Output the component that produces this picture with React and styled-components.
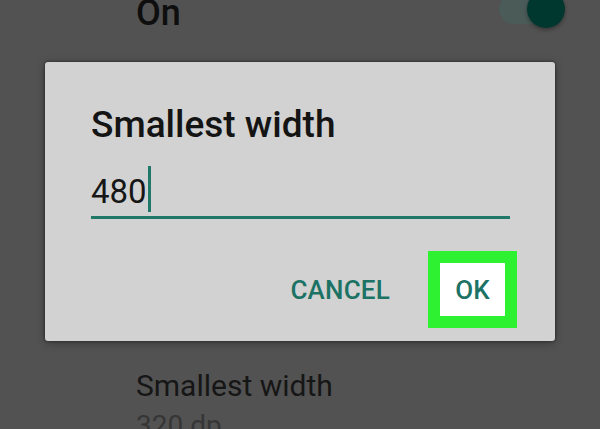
import styled, { createGlobalStyle } from 'styled-components'

const Global = createGlobalStyle`
  html, body {
    margin: 0;
    padding: 0;
    background: #525252;
    overflow: hidden;
  }
  body {
    font-family: Roboto, "Liberation Sans", sans-serif;
  }
`

const Screen = styled.div`
  width: 600px;
  height: 429px;
  background: #525252;
  display: flex;
  flex-direction: column;
  overflow: hidden;
  & > * {
    flex-shrink: 0;
  }
`

const SettingRow = styled.div`
  display: flex;
  align-items: flex-start;
  justify-content: space-between;
  padding: 0 35px 0 136px;
  height: 62px;
`

const SettingLabel = styled.div`
  margin-top: -5px;
  font-size: 36px;
  line-height: 36px;
  font-weight: 500;
  color: #0e0e0e;
`

const Toggle = styled.div`
  position: relative;
  width: 66px;
  height: 40px;
  margin-top: -10px;
`

const Track = styled.div`
  position: absolute;
  left: 0;
  top: 4px;
  width: 56px;
  height: 30px;
  border-radius: 15px;
  background: #4a5b58;
`

const Knob = styled.div`
  position: absolute;
  right: 0;
  top: 0;
  width: 38px;
  height: 38px;
  border-radius: 50%;
  background: #00372f;
  box-shadow: 0 2px 4px rgba(0, 0, 0, 0.35);
`

const Dialog = styled.div`
  margin-left: 45px;
  width: 510px;
  height: 279px;
  box-sizing: border-box;
  background: #d2d2d2;
  border-radius: 3px;
  box-shadow: 0 0 3px rgba(0, 0, 0, 0.55), 0 2px 10px rgba(0, 0, 0, 0.3);
  padding: 44px 45px 13px 46px;
  display: flex;
  flex-direction: column;
`

const Title = styled.div`
  font-size: 37px;
  line-height: 37px;
  font-weight: 500;
  color: #141414;
`

const Field = styled.div`
  margin-top: 23px;
  display: flex;
  align-items: flex-end;
  padding-bottom: 8px;
  border-bottom: 3px solid #1f7868;
`

const Value = styled.span`
  font-size: 33px;
  line-height: 33px;
  color: #161616;
`

const Caret = styled.span`
  width: 3px;
  height: 46px;
  margin: 0 0 -4px 1px;
  background: #1f7868;
`

const Actions = styled.div`
  margin-top: auto;
  display: flex;
  justify-content: flex-end;
  align-items: center;
  gap: 38px;
  margin-right: -7px;
`

const TextButton = styled.button`
  border: none;
  background: transparent;
  padding: 0;
  font-family: inherit;
  font-size: 26px;
  line-height: 26px;
  font-weight: 500;
  color: #1c7365;
  letter-spacing: 0.2px;
`

const Highlight = styled.div`
  width: 89px;
  height: 77px;
  box-sizing: border-box;
  border: 12px solid #2ef231;
  background: #ffffff;
  display: flex;
  align-items: center;
  justify-content: center;
`

const ListItem = styled.div`
  margin-top: 30px;
  padding-left: 136px;
`

const ItemTitle = styled.div`
  font-size: 30px;
  line-height: 30px;
  color: #161616;
`

const ItemSub = styled.div`
  margin-top: 11px;
  font-size: 28px;
  line-height: 28px;
  color: #363636;
`

export default function App() {
  return (
    <Screen>
      <Global />
      <SettingRow>
        <SettingLabel>On</SettingLabel>
        <Toggle>
          <Track />
          <Knob />
        </Toggle>
      </SettingRow>
      <Dialog>
        <Title>Smallest width</Title>
        <Field>
          <Value>480</Value>
          <Caret />
        </Field>
        <Actions>
          <TextButton>CANCEL</TextButton>
          <Highlight>
            <TextButton>OK</TextButton>
          </Highlight>
        </Actions>
      </Dialog>
      <ListItem>
        <ItemTitle>Smallest width</ItemTitle>
        <ItemSub>320 dp</ItemSub>
      </ListItem>
    </Screen>
  )
}
